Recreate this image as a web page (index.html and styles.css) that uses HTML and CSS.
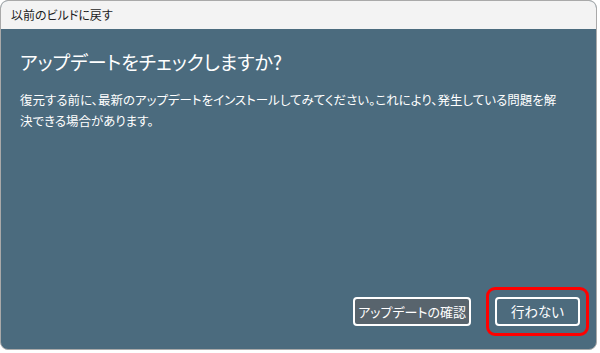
FILE: index.html
```html
<!DOCTYPE html>
<html lang="ja">
<head>
<meta charset="utf-8">
<link rel="stylesheet" href="styles.css">
</head>
<body>
<div class="window">
  <div class="titlebar">以前のビルドに戻す</div>
  <div class="content">
    <h1 class="heading">アップデートをチェックしますか?</h1>
    <p class="desc">復元する前に、最新のアップデートをインストールしてみてください。これにより、発生している問題を解<br>決できる場合があります。</p>
    <div class="spacer"></div>
    <div class="actions">
      <button class="btn btn-check">アップデートの確認</button>
      <div class="highlight">
        <button class="btn btn-skip">行わない</button>
      </div>
    </div>
  </div>
</div>
</body>
</html>
```

FILE: styles.css
```css
html, body {
  margin: 0;
  padding: 0;
  background: #ffffff;
  overflow: hidden;
  width: 600px;
  height: 353px;
}
body {
  font-family: "Noto Sans CJK JP", "Noto Sans", sans-serif;
}
.window {
  width: 597px;
  height: 350px;
  box-sizing: border-box;
  border: 1px solid #a9a9a9;
  border-radius: 8px;
  overflow: hidden;
  display: flex;
  flex-direction: column;
  background: #4b6b7e;
}
.titlebar {
  height: 28px;
  flex: none;
  background: #f3f3f3;
  color: #1c1c1c;
  font-size: 12px;
  line-height: 28px;
  padding-left: 10px;
  font-feature-settings: "palt";
}
.content {
  flex: 1;
  display: flex;
  flex-direction: column;
  padding: 0 0 0 19px;
}
.heading {
  margin: 19px 0 0 0;
  font-size: 19px;
  font-weight: normal;
  color: #ffffff;
  line-height: 28px;
  font-feature-settings: "palt";
}
.desc {
  margin: 13px 0 0 0;
  font-size: 12.5px;
  line-height: 21px;
  color: #ffffff;
  font-feature-settings: "palt";
}
.spacer { flex: 1; }
.actions {
  display: flex;
  justify-content: flex-end;
  align-items: center;
  padding-right: 7px;
  margin-bottom: 13px;
  gap: 15px;
}
.btn {
  font-family: inherit;
  font-size: 13px;
  color: #ffffff;
  border: 2px solid #ffffff;
  border-radius: 4px;
  height: 29px;
  box-sizing: border-box;
  padding: 0;
  line-height: 23px;
  font-feature-settings: "palt";
}
.btn-check {
  width: 118px;
  background: #58646d;
}
.btn-skip {
  width: 85px;
  background: #4d6b7d;
  font-size: 13.5px;
}
.highlight {
  border: 3px solid #ff0000;
  border-radius: 9px;
  padding: 7px 6px;
}
```
